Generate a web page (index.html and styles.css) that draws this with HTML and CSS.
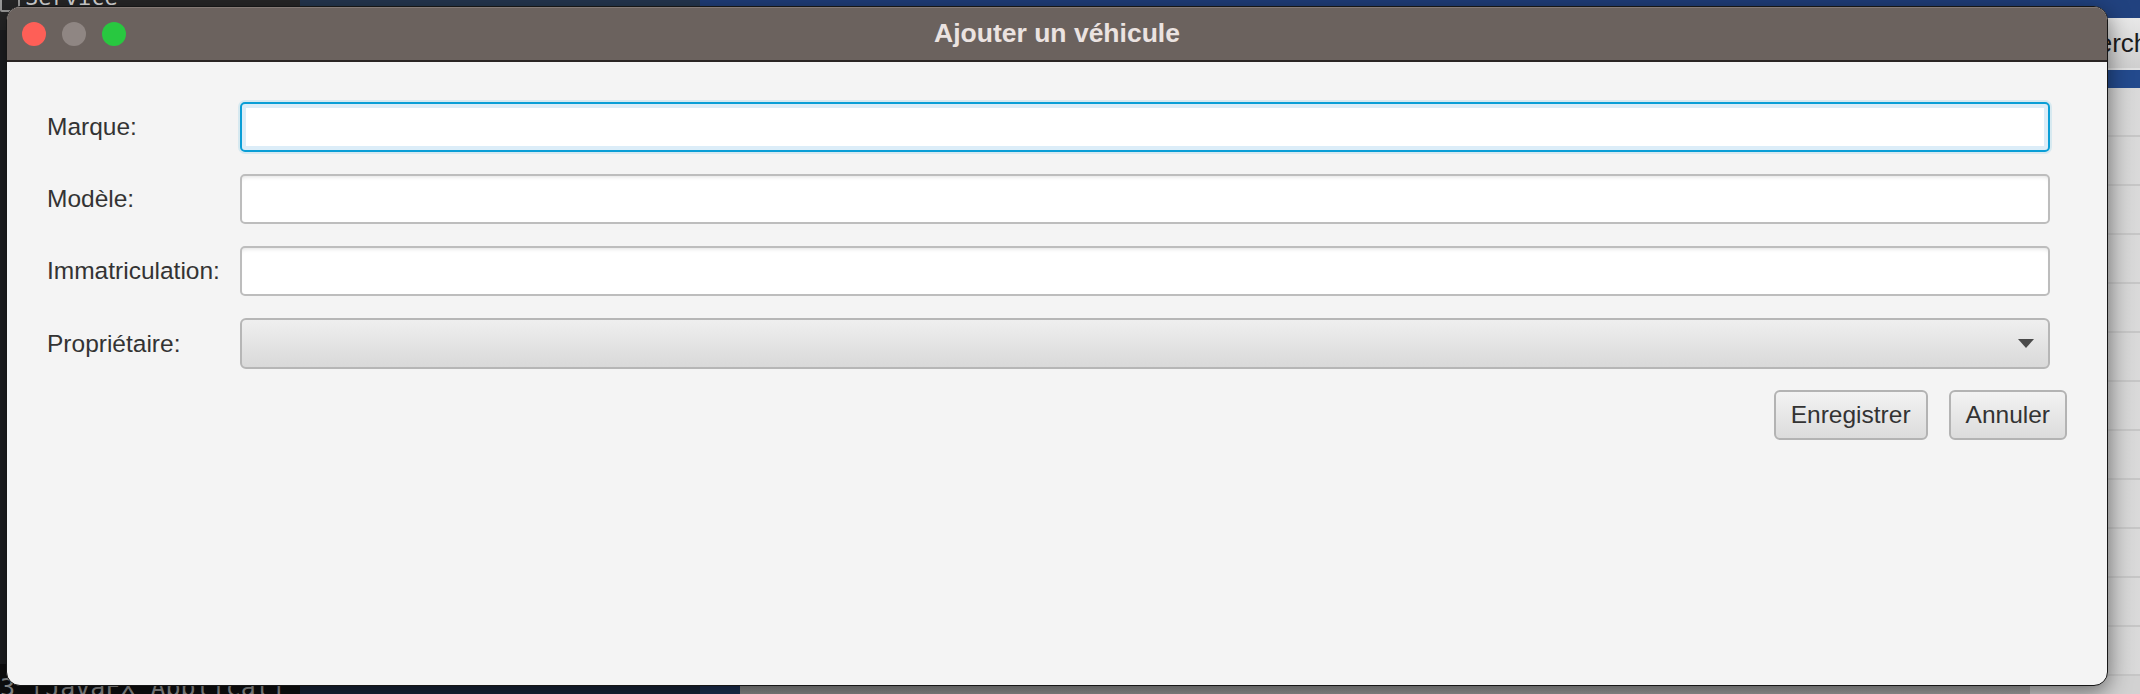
FILE: index.html
```html
<!DOCTYPE html>
<html lang="fr">
<head>
<meta charset="utf-8">
<title>Ajouter un véhicule</title>
<link rel="stylesheet" href="styles.css">
</head>
<body>
<div class="desktop">
  <div class="editor">
    <div class="editor-tab"><span class="tab-icon"></span><span class="tab-text">Service</span></div>
    <div class="editor-body"></div>
    <div class="console">3 [JavaFX Applicati</div>
  </div>
  <div class="midpane">
    <div class="mid-top"></div>
    <div class="mid-body"></div>
    <div class="mid-bottom"></div>
  </div>
  <div class="sidepane">
    <div class="side-top"></div>
    <div class="search-bar"><span class="search-btn">Rechercher</span></div>
    <div class="side-header"></div>
    <div class="side-rows">
      <div class="side-row"></div><div class="side-row"></div><div class="side-row"></div>
      <div class="side-row"></div><div class="side-row"></div><div class="side-row"></div>
      <div class="side-row"></div><div class="side-row"></div><div class="side-row"></div>
      <div class="side-row"></div><div class="side-row"></div><div class="side-row"></div>
    </div>
  </div>

  <div class="window">
    <div class="titlebar">
      <div class="lights">
        <span class="light red"></span>
        <span class="light gray"></span>
        <span class="light green"></span>
      </div>
      <div class="title">Ajouter un véhicule</div>
      <div class="spacer"></div>
    </div>
    <div class="content">
      <div class="form">
        <label class="label">Marque:</label>
        <div class="field focused"></div>
        <label class="label">Modèle:</label>
        <div class="field"></div>
        <label class="label">Immatriculation:</label>
        <div class="field"></div>
        <label class="label">Propriétaire:</label>
        <div class="combo"><span class="arrow"></span></div>
      </div>
      <div class="actions">
        <button class="btn">Enregistrer</button>
        <button class="btn">Annuler</button>
      </div>
    </div>
  </div>
</div>
</body>
</html>
```

FILE: styles.css
```css
* { box-sizing: border-box; }
html, body { margin: 0; padding: 0; }
body {
  width: 2140px;
  height: 694px;
  overflow: hidden;
  font-family: "Liberation Sans", Arial, sans-serif;
  background: #1e1e1e;
}
.desktop {
  position: relative;
  width: 2140px;
  height: 694px;
  display: flex;
  overflow: hidden;
}

/* ---------- backdrop (IDE behind the dialog) ---------- */
.editor {
  width: 300px;
  display: flex;
  flex-direction: column;
  background: #1f1f20;
}
.editor-tab {
  height: 30px;
  background: #262627;
  overflow: hidden;
  display: flex;
  align-items: flex-start;
  gap: 5px;
}
.tab-icon {
  width: 20px;
  height: 14px;
  margin-top: -2px;
  border: 2px solid #9a9a9a;
  border-radius: 2px;
}
.tab-text {
  display: block;
  margin-top: -15px;
  font-family: "DejaVu Sans Mono", monospace;
  font-size: 22px;
  color: #d8d8d8;
}
.editor-body { flex: 1; background: #1e1f22; }
.console {
  height: 30px;
  background: #0f0f10;
  color: #9a9a9a;
  font-family: "DejaVu Sans Mono", monospace;
  font-size: 25px;
  padding-top: 9px;
  white-space: nowrap;
  overflow: hidden;
}
.midpane {
  flex: 1;
  display: flex;
  flex-direction: column;
}
.mid-top {
  height: 30px;
  background: linear-gradient(to right, #24364f 0, #24364f 400px, #1f3d79 400px);
}
.mid-body { flex: 1; background: #c9c9c9; }
.mid-bottom {
  height: 30px;
  background: linear-gradient(to right, #19253a 0, #19253a 400px, #1e3256 400px, #1e3256 440px, #8f8f8f 440px, #a8a8a8 100%);
}
.sidepane {
  width: 110px;
  display: flex;
  flex-direction: column;
  background: #d2d2d2;
}
.side-top { height: 18px; background: #21427f; }
.search-bar {
  height: 52px;
  background: linear-gradient(#e8e8e8, #cfcfcf);
  border-bottom: 2px solid #e0e0e0;
  display: flex;
  align-items: center;
  padding-left: 7px;
  overflow: hidden;
}
.search-btn {
  font-size: 26px;
  color: #1c1c1c;
  white-space: nowrap;
}
.side-header { height: 18px; background: #234a8d; }
.side-rows { flex: 1; display: flex; flex-direction: column; }
.side-row {
  height: 49px;
  flex: none;
  border-bottom: 2px solid #c6c6c6;
  background: linear-gradient(to right, #bcbcbc, #dadada);
}

/* ---------- dialog window ---------- */
.window {
  position: absolute;
  left: 6px;
  top: 6px;
  width: 2102px;
  height: 680px;
  border: 1px solid #161616;
  border-radius: 14px;
  background: #f4f4f4;
  overflow: hidden;
  box-shadow: 0 6px 22px rgba(0, 0, 0, 0.5);
  display: flex;
  flex-direction: column;
}
.titlebar {
  height: 55px;
  flex: none;
  background: #6b625e;
  border-top: 1px solid #847a76;
  border-bottom: 2px solid #2a2524;
  display: grid;
  grid-template-columns: 1fr auto 1fr;
  align-items: center;
}
.lights {
  display: flex;
  gap: 16px;
  padding-left: 15px;
}
.light {
  width: 24px;
  height: 24px;
  border-radius: 50%;
}
.light.red { background: #fe5f57; }
.light.gray { background: #8f8683; }
.light.green { background: #28c840; }
.title {
  font-weight: bold;
  font-size: 26.5px;
  color: #ebe3e1;
  padding-bottom: 1px;
}

.content {
  flex: 1;
  padding: 40px 40px 0 40px;
}
.form {
  display: grid;
  grid-template-columns: 193px 1810px;
  row-gap: 22px;
  align-items: center;
}
.label {
  font-size: 24.5px;
  color: #333333;
}
.field {
  height: 50px;
  background: #ffffff;
  border: 2px solid #bdbdbd;
  border-radius: 5px;
  box-shadow: inset 0 4px 4px -3px rgba(0, 0, 0, 0.12);
}
.field.focused {
  border-color: #0a9ed6;
  box-shadow: inset 0 0 0 4px #dcedf8, 0 0 0 2px rgba(10, 158, 214, 0.12);
}
.combo {
  height: 51px;
  border: 2px solid #b6b6b6;
  border-radius: 6px;
  background: linear-gradient(#efefef, #d9d9d9);
  display: flex;
  align-items: center;
  justify-content: flex-end;
  padding-right: 14px;
}
.arrow {
  width: 0;
  height: 0;
  border-left: 8.5px solid transparent;
  border-right: 8.5px solid transparent;
  border-top: 9px solid #4a4a4a;
}
.actions {
  display: flex;
  justify-content: flex-end;
  gap: 21px;
  margin-top: 21px;
}
.btn {
  height: 50px;
  padding: 0 15px;
  font-family: "Liberation Sans", Arial, sans-serif;
  font-size: 24.5px;
  color: #333333;
  background: linear-gradient(#f3f3f3, #dcdcdc);
  border: 2px solid #b3b3b3;
  border-radius: 6px;
}
```
